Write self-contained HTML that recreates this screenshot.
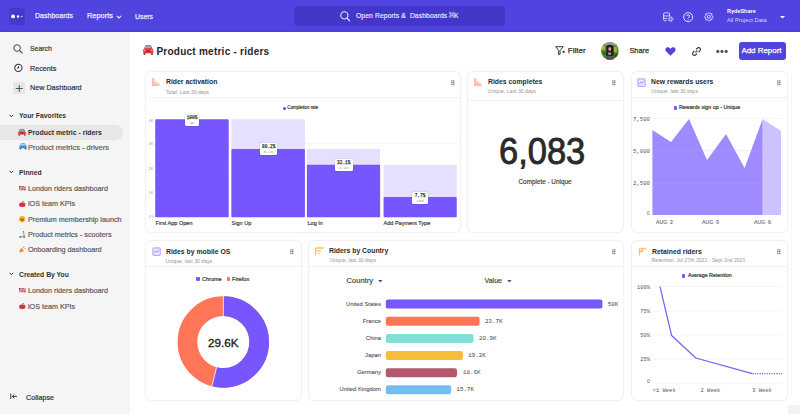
<!DOCTYPE html>
<html><head><meta charset="utf-8">
<style>
*{box-sizing:border-box;margin:0;padding:0}
html,body{width:800px;height:414px;overflow:hidden;background:#fff;font-family:"Liberation Sans",sans-serif;color:#2b2b2b}
.abs{position:absolute}
svg{position:absolute;overflow:visible}
#hdr{position:absolute;left:0;top:0;width:800px;height:32px;background:#4f44e0;border-bottom:1px solid #4a3fd8}
#side{position:absolute;left:0;top:32px;width:129px;height:382px;background:#f5f5f5;border-right:1px solid #f1f1f1;box-shadow:1px 0 0 #fafafa}
.t{position:absolute;white-space:nowrap;line-height:1}
.nav{color:#ebe9fd;font-size:7.2px;-webkit-text-stroke:0.25px #ebe9fd}
.si{font-size:7.2px;color:#5c5c5c;-webkit-text-stroke:0.2px #5c5c5c}
.sh{font-size:6.8px;font-weight:bold;color:#333}
.card{position:absolute;background:#fff;border:1px solid #f2f2f2;border-radius:6px;box-shadow:0 0 1.5px rgba(0,0,0,0.045)}
.ct{font-size:6.85px;font-weight:bold;color:#2b2b2b}
.cs{font-size:5.15px;color:#a3a3a3;-webkit-text-stroke:0.05px #a3a3a3}
.hd{position:absolute;left:0;right:0;height:1px;background:#f0f0f0}
.mono{font-family:"Liberation Mono",monospace}
.ax{font-size:5.6px;color:#6a6a6a;-webkit-text-stroke:0.05px #6a6a6a}
.lg{font-size:5.1px;font-weight:bold;color:#3a3a3a}
.grip{position:absolute;width:4px;height:5px}
.grip i{position:absolute;width:1.3px;height:1.3px;background:#8a8a8a;border-radius:50%}
.tip{position:absolute;background:#fff;border-radius:1.5px;box-shadow:0 0 1.2px rgba(0,0,0,0.4);text-align:center}
.tip b{display:block;font-family:"Liberation Mono",monospace;font-size:5.2px;line-height:5px;margin-top:2.3px;color:#333;font-weight:normal;-webkit-text-stroke:0.25px #333;transform:scaleX(0.85)}
.tip i{display:block;font-style:normal;font-family:"Liberation Mono",monospace;font-size:4.2px;line-height:4.5px;color:#999;margin-top:-0.5px}
.lbl{font-size:5.85px;color:#555;text-align:right;-webkit-text-stroke:0.1px #555}
.val{font-size:5.85px;color:#555;-webkit-text-stroke:0.05px #555}
</style></head><body>
<div id="hdr">
  <div class="abs" style="left:8.7px;top:8px;width:16.3px;height:16.5px;border-radius:3px;background:#4438ce"></div>
  <svg style="left:8px;top:8px" width="18" height="18" viewBox="0 0 18 18"><circle cx="5.05" cy="8.4" r="1.95" fill="#fff"/><circle cx="10.05" cy="8.4" r="1.25" fill="#fff"/><circle cx="13.7" cy="8.4" r="0.75" fill="#fff" opacity="0.9"/></svg>
  <div class="t nav" style="left:35px;top:12px;font-size:7.58px;transform:scaleX(0.93);transform-origin:0 0">Dashboards</div>
  <div class="t nav" style="left:87px;top:12px;font-size:7.96px;transform:scaleX(0.93);transform-origin:0 0">Reports</div>
  <svg style="left:116px;top:15px" width="6" height="4" viewBox="0 0 6 4"><path d="M0.8 0.8 L3 3 L5.2 0.8" fill="none" stroke="#ebe9fd" stroke-width="1.1"/></svg>
  <div class="t nav" style="left:135px;top:13.2px;font-size:7.42px;transform:scaleX(0.93);transform-origin:0 0">Users</div>
  <div class="abs" style="left:294px;top:6px;width:211px;height:19.5px;border-radius:4px;background:#4337c9"></div>
  <svg style="left:339.5px;top:11px" width="11" height="11" viewBox="0 0 11 11"><circle cx="4.4" cy="4.4" r="3.6" fill="none" stroke="#ebe9fd" stroke-width="1.1"/><path d="M7 7.1 L9.6 9.8" stroke="#ebe9fd" stroke-width="1.2" stroke-linecap="round"/></svg>
  <div class="t nav" style="left:355.5px;top:12px;font-size:7.26px;-webkit-text-stroke:0.15px #ebe9fd;transform:scaleX(0.93);transform-origin:0 0;letter-spacing:0.12px">Open Reports &amp;&nbsp; Dashboards</div>
  <svg style="left:448.6px;top:12.4px" width="5.6" height="5.6" viewBox="0 0 6 6"><path d="M2 2 H4 V4 H2 Z M2 2 V1.1 A0.9 0.9 0 1 0 1.1 2 H2 M4 2 V1.1 A0.9 0.9 0 1 1 4.9 2 H4 M4 4 V4.9 A0.9 0.9 0 1 0 4.9 4 H4 M2 4 V4.9 A0.9 0.9 0 1 1 1.1 4 H2" fill="none" stroke="#ebe9fd" stroke-width="0.65"/></svg>
  <div class="t nav" style="left:453.6px;top:12px;font-size:7.26px;-webkit-text-stroke:0.15px #ebe9fd;transform:scaleX(0.93);transform-origin:0 0">K</div>
  <!-- right icons -->
  <svg style="left:663px;top:12.3px" width="10.5" height="10" viewBox="0 0 10.5 10"><path d="M0.6 1.7 C0.6 0.4 6.6 0.4 6.6 1.7 V3.2 C6.6 4.3 0.6 4.3 0.6 3.2 Z M0.6 3.2 V5.6 C0.6 6.5 3 6.8 4.2 6.6 M0.6 5.6 V7.8 C0.6 8.7 2.6 9 3.6 8.8 M6.6 3.2 V4.4" fill="none" stroke="#ebe9fd" stroke-width="0.9"/><circle cx="7.6" cy="7.1" r="1.6" fill="none" stroke="#ebe9fd" stroke-width="0.9"/><circle cx="7.6" cy="7.1" r="2.5" fill="none" stroke="#ebe9fd" stroke-width="0.7" stroke-dasharray="0.9 1.06"/></svg>
  <svg style="left:682.8px;top:11.5px" width="10.5" height="10.5" viewBox="0 0 10.5 10.5"><circle cx="5.15" cy="5.1" r="4.5" fill="none" stroke="#ebe9fd" stroke-width="0.95"/><path d="M3.7 4 C3.7 2.3 6.6 2.3 6.6 4 C6.6 5.1 5.15 5.1 5.15 6.3" fill="none" stroke="#ebe9fd" stroke-width="0.9"/><circle cx="5.15" cy="7.7" r="0.55" fill="#ebe9fd"/></svg>
  <svg style="left:703.6px;top:11.7px" width="9.6" height="9.6" viewBox="0 0 9.6 9.6"><polygon points="4.80,0.50 6.06,1.75 7.84,1.76 7.85,3.54 9.10,4.80 7.85,6.06 7.84,7.84 6.06,7.85 4.80,9.10 3.54,7.85 1.76,7.84 1.75,6.06 0.50,4.80 1.75,3.54 1.76,1.76 3.54,1.75" fill="none" stroke="#ebe9fd" stroke-width="0.9" stroke-linejoin="round"/><circle cx="4.8" cy="4.8" r="1.45" fill="none" stroke="#ebe9fd" stroke-width="0.9"/></svg>
  <div class="t" style="left:727px;top:9.4px;font-size:5.5px;font-weight:bold;color:#fff">RydeShare</div>
  <div class="t" style="left:727px;top:18.2px;font-size:5.75px;color:#d9d6f9">All Project Data</div>
  <svg style="left:779.5px;top:15.5px" width="5" height="3" viewBox="0 0 5 3"><path d="M0 0 H5 L2.5 2.6 Z" fill="#fff"/></svg>
</div>

<div id="side">
  <svg style="left:13px;top:12.0px" width="11" height="10" viewBox="0 0 11 10"><circle cx="4.1" cy="4" r="3.3" fill="none" stroke="#444" stroke-width="1"/><path d="M6.5 6.4 L9.6 9.4" stroke="#444" stroke-width="1.1"/></svg>
  <div class="t si" style="left:30px;top:13.1px;font-size:7.42px;color:#333;-webkit-text-stroke:0.2px #333;transform:scaleX(0.93);transform-origin:0 0">Search</div>
  <svg style="left:13.6px;top:32.2px" width="9" height="9" viewBox="0 0 9 9"><circle cx="4.35" cy="3.85" r="3.65" fill="none" stroke="#333" stroke-width="1.05"/><path d="M4.5 2.1 V4.05 H2.9" fill="none" stroke="#333" stroke-width="0.95" stroke-linejoin="round"/></svg>
  <div class="t si" style="left:30px;top:32.7px;color:#333;-webkit-text-stroke:0.2px #333;font-size:7.74px;transform:scaleX(0.93);transform-origin:0 0">Recents</div>
  <div class="abs" style="left:13px;top:49.5px;width:11.5px;height:12.3px;background:#e6e6e6;border-radius:1px"></div>
  <svg style="left:14.5px;top:51.5px" width="9" height="9" viewBox="0 0 9 9"><path d="M4.3 1 V8 M0.8 4.5 H7.8" stroke="#444" stroke-width="0.9"/></svg>
  <div class="t si" style="left:30px;top:51.8px;color:#333;-webkit-text-stroke:0.2px #333;font-size:7.74px;transform:scaleX(0.93);transform-origin:0 0">New Dashboard</div>

  <svg style="left:9px;top:81.6px" width="5" height="4" viewBox="0 0 5 4"><path d="M0.6 0.8 L2.4 2.7 L4.2 0.8" fill="none" stroke="#333" stroke-width="1"/></svg>
  <div class="t sh" style="left:18.7px;top:80.3px;font-size:7.31px;transform:scaleX(0.93);transform-origin:0 0">Your Favorites</div>
  <div class="abs" style="left:0;top:92.5px;width:122.5px;height:15.5px;border-radius:0 8px 8px 0;background:#e7e7e7"></div>
  <div class="t sh" style="left:27.8px;top:97.2px;font-size:7.42px;color:#2f2f2f;transform:scaleX(0.93);transform-origin:0 0">Product metric - riders</div>
  <div class="t si" style="left:28px;top:111.5px;font-size:8.04px;transform:scaleX(0.93);transform-origin:0 0">Product metrics - drivers</div>

  <svg style="left:9px;top:138.0px" width="5" height="4" viewBox="0 0 5 4"><path d="M0.6 0.8 L2.4 2.7 L4.2 0.8" fill="none" stroke="#333" stroke-width="1"/></svg>
  <div class="t sh" style="left:18.7px;top:136.8px;font-size:7.31px;transform:scaleX(0.93);transform-origin:0 0">Pinned</div>
  <div class="t si" style="left:28px;top:152.5px;font-size:7.74px;transform:scaleX(0.93);transform-origin:0 0">London riders dashboard</div>
  <div class="t si" style="left:28px;top:168.0px;font-size:7.74px;transform:scaleX(0.93);transform-origin:0 0">iOS team KPIs</div>
  <div class="t si" style="left:28px;top:183.5px;font-size:7.74px;transform:scaleX(0.93);transform-origin:0 0">Premium membership launch</div>
  <div class="t si" style="left:28px;top:198.5px;font-size:7.74px;transform:scaleX(0.93);transform-origin:0 0">Product metrics - scooters</div>
  <div class="t si" style="left:28px;top:214.0px;font-size:7.74px;transform:scaleX(0.93);transform-origin:0 0">Onboarding dashboard</div>

  <svg style="left:9px;top:240.0px" width="5" height="4" viewBox="0 0 5 4"><path d="M0.6 0.8 L2.4 2.7 L4.2 0.8" fill="none" stroke="#333" stroke-width="1"/></svg>
  <div class="t sh" style="left:18.7px;top:238.8px;font-size:7.31px;transform:scaleX(0.93);transform-origin:0 0">Created By You</div>
  <div class="t si" style="left:28px;top:254.5px;font-size:7.74px;transform:scaleX(0.93);transform-origin:0 0">London riders dashboard</div>
  <div class="t si" style="left:28px;top:270.5px;font-size:7.74px;transform:scaleX(0.93);transform-origin:0 0">iOS team KPIs</div>

  <svg style="left:10px;top:361.0px" width="8" height="7" viewBox="0 0 8 7"><path d="M0.8 0.7 V6 M7 3.4 H2.4 M4.3 1.5 L2.4 3.4 L4.3 5.3" fill="none" stroke="#333" stroke-width="1"/></svg>
  <div class="t si" style="left:26px;top:361.5px;color:#333;-webkit-text-stroke:0.2px #333;font-size:7.74px;transform:scaleX(0.93);transform-origin:0 0">Collapse</div>

  <!-- emojis -->
  <svg style="left:18.2px;top:96.6px" width="8" height="6.5" viewBox="0 0 8 6.5"><path d="M1.5 0.9 Q1.8 0.2 2.5 0.2 H5.5 Q6.2 0.2 6.5 0.9 L7 2.5 Q7.8 2.9 7.8 3.8 V5.6 H0.2 V3.8 Q0.2 2.9 1 2.5 Z" fill="#e8323c"/><path d="M1.9 0.9 H6.1 L6.5 2.4 H1.5 Z" fill="#5bbfe8"/><rect x="2.7" y="3.9" width="2.6" height="1" fill="#a82030"/><rect x="0.5" y="5.5" width="1.5" height="1" fill="#2a2a2a"/><rect x="6" y="5.5" width="1.5" height="1" fill="#2a2a2a"/></svg>
  <svg style="left:18.8px;top:110.69999999999999px" width="8" height="6.2" viewBox="0 0 8 6.2"><path d="M0.3 3.2 L1.8 0.8 Q2.1 0.3 2.8 0.3 H5 Q5.7 0.3 6.2 0.8 L7.7 3.2 V5.2 H0.3 Z" fill="#3aa6dc"/><path d="M2.2 0.9 H5.6 L6.6 2.6 H1.3 Z" fill="#9fdcf5"/><rect x="2.3" y="3.4" width="3.4" height="0.8" fill="#1d6fa0"/><rect x="0.7" y="5.1" width="1.6" height="1.1" fill="#2a2a2a"/><rect x="5.7" y="5.1" width="1.6" height="1.1" fill="#2a2a2a"/></svg>
  <svg style="left:19.2px;top:153.8px" width="6.5" height="4.2" viewBox="0 0 6.5 4.2"><rect x="0" y="0" width="6.5" height="4.2" fill="#c8283c"/><path d="M0 0 L6.5 4.2 M6.5 0 L0 4.2" stroke="#fff" stroke-width="0.7"/><path d="M3.25 0 V4.2 M0 2.1 H6.5" stroke="#fff" stroke-width="1.3"/><path d="M3.25 0 V4.2 M0 2.1 H6.5" stroke="#c8283c" stroke-width="0.7"/><rect x="0" y="0" width="1.2" height="1" fill="#2b4a9a"/><rect x="5.3" y="3.2" width="1.2" height="1" fill="#2b4a9a"/></svg>
  <svg style="left:19.1px;top:168.8px" width="6.5" height="6.2" viewBox="0 0 6.5 6.2"><circle cx="2.3" cy="3.8" r="2.3" fill="#d8343b"/><circle cx="4.2" cy="3.8" r="2.3" fill="#d8343b"/><path d="M3.2 1.6 L3.6 0.2" stroke="#6b4a2a" stroke-width="0.5"/><path d="M3.5 1 C4.4 0.1 5.4 0.4 5.4 0.4 C5 1.3 4.1 1.3 3.5 1Z" fill="#5aa03c"/></svg>
  <svg style="left:19.2px;top:183.6px" width="6.3" height="6.3" viewBox="0 0 6.3 6.3"><circle cx="3.15" cy="3.15" r="3.1" fill="#f5b52e"/><path d="M1.3 3.3 C1.7 5.4 4.6 5.4 5 3.3 Z" fill="#8a4b18"/><path d="M1.5 2.4 Q2.1 1.7 2.6 2.4 M3.7 2.4 Q4.2 1.7 4.8 2.4" fill="none" stroke="#6b3a10" stroke-width="0.45"/></svg>
  <svg style="left:19.2px;top:198.8px" width="6.5" height="7" viewBox="0 0 6.5 7"><path d="M4.6 0.5 L5.2 5.8 M0.8 5.8 H5.2 M3.9 0.5 H5.2" fill="none" stroke="#555" stroke-width="0.65"/><circle cx="1.1" cy="6" r="0.85" fill="#666"/><circle cx="5.3" cy="6" r="0.85" fill="#666"/></svg>
  <svg style="left:19.2px;top:213.8px" width="6.6" height="6.8" viewBox="0 0 6.6 6.8"><path d="M0.3 6.6 L2 1.6 L5.4 5 Z" fill="#f2a93b"/><path d="M0.8 5.3 L2.4 2.6 M1.2 6.2 L4 4.4" stroke="#e24a3c" stroke-width="0.55"/><circle cx="4.3" cy="1" r="0.55" fill="#4a9be0"/><circle cx="6" cy="2.3" r="0.55" fill="#e24a7c"/><path d="M3.4 2.5 L5.7 0.5" stroke="#5ab04c" stroke-width="0.45"/></svg>
  <svg style="left:19.2px;top:255.60000000000002px" width="6.5" height="4.2" viewBox="0 0 6.5 4.2"><rect x="0" y="0" width="6.5" height="4.2" fill="#c8283c"/><path d="M0 0 L6.5 4.2 M6.5 0 L0 4.2" stroke="#fff" stroke-width="0.7"/><path d="M3.25 0 V4.2 M0 2.1 H6.5" stroke="#fff" stroke-width="1.3"/><path d="M3.25 0 V4.2 M0 2.1 H6.5" stroke="#c8283c" stroke-width="0.7"/><rect x="0" y="0" width="1.2" height="1" fill="#2b4a9a"/><rect x="5.3" y="3.2" width="1.2" height="1" fill="#2b4a9a"/></svg>
  <svg style="left:19.1px;top:270.7px" width="6.5" height="6.2" viewBox="0 0 6.5 6.2"><circle cx="2.3" cy="3.8" r="2.3" fill="#d8343b"/><circle cx="4.2" cy="3.8" r="2.3" fill="#d8343b"/><path d="M3.2 1.6 L3.6 0.2" stroke="#6b4a2a" stroke-width="0.5"/><path d="M3.5 1 C4.4 0.1 5.4 0.4 5.4 0.4 C5 1.3 4.1 1.3 3.5 1Z" fill="#5aa03c"/></svg>
</div>

<!-- page title -->
<svg style="left:142.8px;top:45.4px" width="10.5" height="10" viewBox="0 0 10.5 10"><path d="M2 1.2 Q2.4 0.3 3.4 0.3 H7.1 Q8.1 0.3 8.5 1.2 L9.3 3.4 Q10.3 3.9 10.3 5 V8.3 H0.2 V5 Q0.2 3.9 1.2 3.4 Z" fill="#e8323c"/><path d="M2.6 1.3 H7.9 L8.5 3.2 H2 Z" fill="#6cc4ec"/><rect x="3.6" y="5.4" width="3.3" height="1.4" fill="#b8222c"/><circle cx="1.7" cy="5.2" r="0.8" fill="#ffb0a0"/><circle cx="8.8" cy="5.2" r="0.8" fill="#ffb0a0"/><rect x="0.6" y="8.2" width="1.8" height="1.6" rx="0.4" fill="#2a2a2a"/><rect x="8.1" y="8.2" width="1.8" height="1.6" rx="0.4" fill="#2a2a2a"/></svg>
<div class="t" style="left:156.4px;top:46.7px;font-size:10px;font-weight:bold;color:#262626;letter-spacing:0.25px">Product metric - riders</div>

<!-- toolbar -->
<svg style="left:554.5px;top:46.4px" width="11" height="10" viewBox="0 0 11 10"><path d="M0.7 0.7 H8.3 L5.1 4.3 V8.2 L3.6 8.6 V4.3 Z" fill="none" stroke="#2e2e2e" stroke-width="0.95" stroke-linejoin="round"/><circle cx="8.6" cy="5.9" r="1.1" fill="#2e2e2e"/></svg>
<div class="t" style="left:567.8px;top:46.5px;font-size:8px;color:#333;-webkit-text-stroke:0.25px #333">Filter</div>
<svg style="left:600.8px;top:42.1px" width="17.8" height="17.8" viewBox="0 0 18 18"><defs><clipPath id="avc"><circle cx="9" cy="9" r="9"/></clipPath></defs><g clip-path="url(#avc)"><rect width="18" height="18" fill="#4f8a2c"/><rect x="0" y="0" width="18" height="3.5" fill="#9a9a9a"/><rect x="1" y="4" width="3" height="4" fill="#b4b23a"/><rect x="13" y="5" width="3" height="5" fill="#a7b03c"/><rect x="2" y="10" width="2.5" height="3" fill="#2f5a1c"/><rect x="14" y="12" width="3" height="3" fill="#2c4a1a"/><path d="M5.5 4 Q9 1.5 12.5 4 L13 18 H5 Z" fill="#1e1e1e"/><rect x="7.6" y="5.2" width="2.6" height="3.6" rx="1" fill="#e49a92"/><rect x="7.2" y="10.5" width="3" height="2.5" fill="#d8c8c0" opacity="0.7"/><rect x="5" y="14" width="8" height="4" fill="#555"/></g></svg>
<div class="t" style="left:629.5px;top:46.5px;font-size:7.3px;color:#333;-webkit-text-stroke:0.25px #333">Share</div>
<svg style="left:665px;top:47px" width="11" height="9" viewBox="0 0 11 9"><path d="M5.5 8.7 L1.2 4.6 C-0.4 3 0.5 0.3 2.8 0.3 C4 0.3 4.9 1 5.5 1.9 C6.1 1 7 0.3 8.2 0.3 C10.5 0.3 11.4 3 9.8 4.6 Z" fill="#4f44e0"/></svg>
<svg style="left:692px;top:46.5px" width="9" height="9" viewBox="0 0 9 9"><path d="M3.8 5.2 L5.2 3.8 M4.3 2.2 L5.3 1.2 C6 0.5 7.3 0.5 8 1.2 C8.6 1.9 8.6 3 8 3.7 L6.9 4.8 M4.7 6.9 L3.7 7.9 C3 8.6 1.8 8.6 1.1 7.9 C0.4 7.2 0.4 6 1.1 5.3 L2.2 4.2" fill="none" stroke="#333" stroke-width="1.15" stroke-linecap="round"/></svg>
<svg style="left:716px;top:48.5px" width="12" height="5" viewBox="0 0 12 5"><circle cx="1.8" cy="2.4" r="1.6" fill="#555"/><circle cx="6" cy="2.4" r="1.6" fill="#555"/><circle cx="10.2" cy="2.4" r="1.6" fill="#555"/></svg>
<div class="abs" style="left:738.5px;top:42px;width:47.5px;height:17.5px;border-radius:3px;background:#4f44e0"></div>
<div class="t" style="left:741.4px;top:47px;font-size:7.95px;color:#fff;-webkit-text-stroke:0.25px #fff">Add Report</div>

<!-- ============ CARD 1: Rider activation ============ -->
<div class="card" style="left:145px;top:71px;width:316px;height:161.5px"></div>
<svg style="left:151.9px;top:77.6px" width="8" height="8.5" viewBox="0 0 8 8.5"><g fill="#ff9c84" opacity="0.72"><rect x="0" y="0.3" width="2.4" height="7.9" rx="0.6"/><rect x="2.3" y="3.6" width="2.4" height="4.6"/><rect x="4.6" y="5.3" width="2.7" height="2.9" rx="0.4"/></g><g fill="#fff" opacity="0.55"><rect x="0.7" y="2.6" width="1" height="1"/><rect x="3" y="5" width="1" height="1"/><rect x="5.4" y="6.4" width="1.1" height="0.8"/></g></svg>
<div class="t ct" style="left:166px;top:78.3px;font-size:7.37px;transform:scaleX(0.93);transform-origin:0 0">Rider activation</div>
<div class="t cs" style="left:166px;top:89.5px">Total, Last 30 days</div>
<div class="abs" style="left:146px;top:97px;width:314px;height:1px;background:#f0f0f0"></div>
<svg style="left:450.9px;top:79.6px" width="4" height="6" viewBox="0 0 4 6"><g fill="#5a5a5a"><circle cx="0.9" cy="0.9" r="0.72"/><circle cx="2.8" cy="0.9" r="0.72"/><circle cx="0.9" cy="2.75" r="0.72"/><circle cx="2.8" cy="2.75" r="0.72"/><circle cx="0.9" cy="4.6" r="0.72"/><circle cx="2.8" cy="4.6" r="0.72"/></g></svg>
<!-- legend -->
<div class="abs" style="left:282.8px;top:106.6px;width:3px;height:3px;border-radius:50%;background:#5a46f0"></div>
<div class="t" style="left:287.2px;top:105.6px;font-size:4.5px;color:#333;-webkit-text-stroke:0.15px #333;letter-spacing:-0.05px">Completion rate</div>
<!-- axes -->
<div class="t" style="left:148.6px;top:119.0px;font-size:4.1px;color:#aaa">4K</div>
<div class="t" style="left:148.6px;top:142.4px;font-size:4.1px;color:#aaa">3K</div>
<div class="t" style="left:148.6px;top:166.8px;font-size:4.1px;color:#aaa">2K</div>
<div class="t" style="left:148.6px;top:191.0px;font-size:4.1px;color:#aaa">1K</div>
<div class="t" style="left:148.6px;top:215.4px;font-size:4.1px;color:#aaa">0%</div>
<svg style="left:0;top:0" width="800" height="414" viewBox="0 0 800 414">
  <line x1="155" y1="143.6" x2="457" y2="143.6" stroke="#f2f2f2" stroke-width="0.8"/>
  <line x1="156" y1="168" x2="457" y2="168" stroke="#f2f2f2" stroke-width="0.8"/>
  <line x1="156" y1="192.5" x2="457" y2="192.5" stroke="#f2f2f2" stroke-width="0.8"/>
  <rect x="155.2" y="119.3" width="73.5" height="97.9" rx="0.8" fill="#7856ff"/>
  <rect x="231.4" y="119.3" width="73.5" height="97.9" fill="#e5e0ff"/>
  <rect x="231.4" y="149" width="73.5" height="68.2" rx="0.8" fill="#7856ff"/>
  <rect x="306.9" y="149" width="73.2" height="68.2" fill="#e5e0ff"/>
  <rect x="306.9" y="164.8" width="73.2" height="52.4" rx="0.8" fill="#7856ff"/>
  <rect x="383.6" y="164.9" width="73.1" height="52.3" fill="#e5e0ff"/>
  <rect x="383.6" y="197" width="73.1" height="20.2" rx="0.8" fill="#7856ff"/>
</svg>
<div class="tip" style="left:185px;top:114px;width:14px;height:11.5px"><b>100%</b><i>4K</i></div>
<div class="tip" style="left:259.5px;top:143px;width:17.5px;height:12px"><b>80.2%</b><i>3.2K</i></div>
<div class="tip" style="left:335px;top:159px;width:17.5px;height:12px"><b>32.1%</b><i>2.4K</i></div>
<div class="tip" style="left:412px;top:192px;width:16px;height:12px"><b>7.7%</b><i>283</i></div>
<div class="t" style="left:155.5px;top:221px;font-size:5.55px;color:#333;-webkit-text-stroke:0.15px #333">First App Open</div>
<div class="t" style="left:231.5px;top:221px;font-size:5.55px;color:#333;-webkit-text-stroke:0.15px #333">Sign Up</div>
<div class="t" style="left:307.5px;top:221px;font-size:5.55px;color:#333;-webkit-text-stroke:0.15px #333">Log In</div>
<div class="t" style="left:383.5px;top:221px;font-size:5.55px;color:#333;-webkit-text-stroke:0.15px #333">Add Payment Type</div>

<!-- ============ CARD 2: Rides completes ============ -->
<div class="card" style="left:467px;top:71px;width:157px;height:161.5px"></div>
<svg style="left:473.9px;top:77.6px" width="8" height="8.5" viewBox="0 0 8 8.5"><g fill="#ff9c84" opacity="0.72"><rect x="0" y="0.3" width="2.4" height="7.9" rx="0.6"/><rect x="2.3" y="3.6" width="2.4" height="4.6"/><rect x="4.6" y="5.3" width="2.7" height="2.9" rx="0.4"/></g><g fill="#fff" opacity="0.55"><rect x="0.7" y="2.6" width="1" height="1"/><rect x="3" y="5" width="1" height="1"/><rect x="5.4" y="6.4" width="1.1" height="0.8"/></g></svg>
<div class="t ct" style="left:487.6px;top:78.2px;font-size:7.37px;transform:scaleX(0.93);transform-origin:0 0">Rides completes</div>
<div class="t cs" style="left:487.6px;top:89.3px">Unique, Last 30 days</div>
<div class="abs" style="left:468px;top:100.3px;width:155px;height:1px;background:#f0f0f0"></div>
<svg style="left:612.4px;top:79.6px" width="4" height="6" viewBox="0 0 4 6"><g fill="#5a5a5a"><circle cx="0.9" cy="0.9" r="0.72"/><circle cx="2.8" cy="0.9" r="0.72"/><circle cx="0.9" cy="2.75" r="0.72"/><circle cx="2.8" cy="2.75" r="0.72"/><circle cx="0.9" cy="4.6" r="0.72"/><circle cx="2.8" cy="4.6" r="0.72"/></g></svg>
<div class="t" style="left:499px;top:133.2px;font-size:37.7px;color:#2a2a2a;-webkit-text-stroke:0.9px #2a2a2a;transform:scaleX(0.915);transform-origin:0 0">6,083</div>
<div class="t" style="left:518.5px;top:179px;font-size:6.36px;color:#3a3a3a;-webkit-text-stroke:0.15px #3a3a3a">Complete - Unique</div>

<!-- ============ CARD 3: New rewards users ============ -->
<div class="card" style="left:631px;top:71px;width:156.5px;height:161.5px"></div>
<svg style="left:637px;top:78px" width="9" height="9" viewBox="0 0 9 9"><rect x="0.9" y="0.9" width="7.3" height="7.5" rx="0.5" fill="#ece7ff" stroke="#a893ff" stroke-width="0.9"/><path d="M2.2 6.2 L3.8 3.9 L5.2 5.2 L6.9 2.8" fill="none" stroke="#9a84ff" stroke-width="0.85"/></svg>
<div class="t ct" style="left:651.4px;top:78.2px;font-size:7.37px;transform:scaleX(0.93);transform-origin:0 0">New rewards users</div>
<div class="t cs" style="left:651.4px;top:89.3px">Unique, last 30 days</div>
<div class="abs" style="left:632px;top:97px;width:154.5px;height:1px;background:#f0f0f0"></div>
<svg style="left:776.6px;top:79.6px" width="4" height="6" viewBox="0 0 4 6"><g fill="#5a5a5a"><circle cx="0.9" cy="0.9" r="0.72"/><circle cx="2.8" cy="0.9" r="0.72"/><circle cx="0.9" cy="2.75" r="0.72"/><circle cx="2.8" cy="2.75" r="0.72"/><circle cx="0.9" cy="4.6" r="0.72"/><circle cx="2.8" cy="4.6" r="0.72"/></g></svg>
<div class="abs" style="left:673.5px;top:106.3px;width:3.6px;height:3.6px;border-radius:1px;background:#7856ff"></div>
<div class="t lg" style="left:679px;top:105.3px;font-size:5.55px;font-weight:normal;-webkit-text-stroke:0.22px #3a3a3a;transform:scaleX(0.96);transform-origin:0 0">Rewards sign up - Unique</div>
<div class="t ax mono" style="left:633px;top:116.5px;font-size:5.67px">7,500</div>
<div class="t ax mono" style="left:633px;top:148.5px;font-size:5.67px">5,000</div>
<div class="t ax mono" style="left:633px;top:180.5px;font-size:5.67px">2,500</div>
<div class="t" style="left:646.8px;top:210.8px;font-size:5.4px;color:#666">0</div>
<svg style="left:0;top:0" width="800" height="414" viewBox="0 0 800 414">
  <line x1="652" y1="118.6" x2="782" y2="118.6" stroke="#efefef" stroke-width="0.8"/>
  <polygon points="652.4,130 671,142 689,119 707,160 726,134 744.6,168 762.6,119 762.6,215 652.4,215" fill="#9f8aff"/>
  <polygon points="762.6,119 781,131 781,215 762.6,215" fill="#cdc2ff"/>
  <line x1="652.4" y1="150.8" x2="762" y2="150.8" stroke="#b9abff" stroke-width="0.6" stroke-dasharray="0.9 1.1"/>
  <line x1="652.4" y1="183.2" x2="762" y2="183.2" stroke="#b9abff" stroke-width="0.6" stroke-dasharray="0.9 1.1"/>
  <line x1="762" y1="122" x2="762" y2="215" stroke="#8d76ff" stroke-width="0.6" stroke-dasharray="0.9 1.1"/>
</svg>
<div class="t" style="left:656px;top:220px;font-size:5.2px;color:#666;-webkit-text-stroke:0.1px #666">AUG&nbsp;&nbsp;2</div>
<div class="t" style="left:702px;top:220px;font-size:5.2px;color:#666;-webkit-text-stroke:0.1px #666">AUG&nbsp;&nbsp;9</div>
<div class="t" style="left:754px;top:220px;font-size:5.2px;color:#666;-webkit-text-stroke:0.1px #666">AUG&nbsp;&nbsp;6</div>

<!-- ============ CARD 4: Rides by mobile OS ============ -->
<div class="card" style="left:145px;top:240px;width:157px;height:161px"></div>
<svg style="left:151.5px;top:247px" width="9" height="9" viewBox="0 0 9 9"><rect x="0.9" y="0.9" width="7.3" height="7.5" rx="0.5" fill="#ece7ff" stroke="#a893ff" stroke-width="0.9"/><path d="M2.2 6.2 L3.8 3.9 L5.2 5.2 L6.9 2.8" fill="none" stroke="#9a84ff" stroke-width="0.85"/></svg>
<div class="t ct" style="left:165.6px;top:247.8px;font-size:7.37px;transform:scaleX(0.93);transform-origin:0 0">Rides by mobile OS</div>
<div class="t cs" style="left:165.6px;top:258.7px">Unique, last 30 days</div>
<div class="abs" style="left:146px;top:266px;width:155px;height:1px;background:#f0f0f0"></div>
<svg style="left:290.1px;top:248.6px" width="4" height="6" viewBox="0 0 4 6"><g fill="#5a5a5a"><circle cx="0.9" cy="0.9" r="0.72"/><circle cx="2.8" cy="0.9" r="0.72"/><circle cx="0.9" cy="2.75" r="0.72"/><circle cx="2.8" cy="2.75" r="0.72"/><circle cx="0.9" cy="4.6" r="0.72"/><circle cx="2.8" cy="4.6" r="0.72"/></g></svg>
<div class="abs" style="left:196px;top:277.4px;width:3.6px;height:3.6px;border-radius:1px;background:#7856ff"></div>
<div class="t lg" style="left:201.8px;top:276.8px;font-size:5.75px;font-weight:normal;-webkit-text-stroke:0.22px #3a3a3a;transform:scaleX(0.96);transform-origin:0 0">Chrome</div>
<div class="abs" style="left:226.7px;top:277.4px;width:3.6px;height:3.6px;border-radius:1px;background:#ff7557"></div>
<div class="t lg" style="left:232.4px;top:276.8px;font-size:5.9px;font-weight:normal;-webkit-text-stroke:0.22px #3a3a3a;transform:scaleX(0.96);transform-origin:0 0">Firefox</div>
<svg style="left:0;top:0" width="800" height="414" viewBox="0 0 800 414">
  <!-- donut center 223.3,342 r outer 45.7 inner 26 ; mid r 35.85 width 19.7 -->
  <circle cx="223.3" cy="342" r="35.85" fill="none" stroke="#ff7557" stroke-width="19.7"/>
  <circle cx="223.3" cy="342" r="35.85" fill="none" stroke="#7856ff" stroke-width="19.7" stroke-dasharray="121.6 1000" transform="rotate(-90 223.3 342)"/>
  <line x1="223.3" y1="295.5" x2="223.3" y2="316.5" stroke="#fff" stroke-width="0.8"/>
  <line x1="216.6" y1="367.2" x2="211.8" y2="386.6" stroke="#fff" stroke-width="0.8"/>
</svg>
<div class="t" style="left:208px;top:336.5px;font-size:11.7px;color:#222;-webkit-text-stroke:0.35px #222">29.6K</div>

<!-- ============ CARD 5: Riders by Country ============ -->
<div class="card" style="left:308px;top:240px;width:316px;height:161px"></div>
<svg style="left:314.5px;top:246.5px" width="9" height="9" viewBox="0 0 9 9"><path d="M0.5 1 H8.5 M0.5 3.8 H6 M0.5 1 V8.5 M3 6.3 H4.5" fill="none" stroke="#fbc15e" stroke-width="1.3"/></svg>
<div class="t ct" style="left:329.4px;top:247.3px;font-size:7.37px;transform:scaleX(0.93);transform-origin:0 0">Riders by Country</div>
<div class="t cs" style="left:329.4px;top:257.5px">Unique, last 30 days</div>
<div class="abs" style="left:309px;top:266px;width:314px;height:1px;background:#f0f0f0"></div>
<svg style="left:612.4px;top:248.6px" width="4" height="6" viewBox="0 0 4 6"><g fill="#5a5a5a"><circle cx="0.9" cy="0.9" r="0.72"/><circle cx="2.8" cy="0.9" r="0.72"/><circle cx="0.9" cy="2.75" r="0.72"/><circle cx="2.8" cy="2.75" r="0.72"/><circle cx="0.9" cy="4.6" r="0.72"/><circle cx="2.8" cy="4.6" r="0.72"/></g></svg>
<div class="t" style="left:346.6px;top:276.5px;font-size:7.54px;color:#4a4a4a;-webkit-text-stroke:0.2px #4a4a4a">Country</div>
<svg style="left:378px;top:279.8px" width="5" height="3" viewBox="0 0 5 3"><path d="M0.2 0 H4.6 L2.4 2.4 Z" fill="#555"/></svg>
<div class="t" style="left:484.5px;top:276.5px;font-size:7.05px;color:#4a4a4a;-webkit-text-stroke:0.2px #4a4a4a">Value</div>
<svg style="left:507.3px;top:279.8px" width="5" height="3" viewBox="0 0 5 3"><path d="M0.2 0 H4.6 L2.4 2.4 Z" fill="#555"/></svg>
<svg style="left:0;top:0" width="800" height="414" viewBox="0 0 800 414">
  <rect x="385.8" y="299.6" width="216.6" height="9" rx="2.2" fill="#7856ff"/>
  <rect x="385.8" y="316.7" width="93.8" height="9" rx="2.2" fill="#ff7557"/>
  <rect x="385.8" y="333.9" width="87.7" height="9" rx="2.2" fill="#80e0d8"/>
  <rect x="385.8" y="351" width="77.1" height="9" rx="2.2" fill="#f8bc3b"/>
  <rect x="385.8" y="368.2" width="71.2" height="9" rx="2.2" fill="#b2596e"/>
  <rect x="385.8" y="385.3" width="65.4" height="9" rx="2.2" fill="#72bef4"/>
</svg>
<div class="t lbl" style="right:419px;top:302.2px">United States</div>
<div class="t lbl" style="right:419px;top:318.5px">France</div>
<div class="t lbl" style="right:419px;top:335.7px">China</div>
<div class="t lbl" style="right:419px;top:352.5px">Japan</div>
<div class="t lbl" style="right:419px;top:369.8px">Germany</div>
<div class="t lbl" style="right:419px;top:387.3px">United Kingdom</div>
<div class="t val mono" style="left:607.8px;top:302.2px">50K</div>
<div class="t val mono" style="left:485px;top:318.5px">23.7K</div>
<div class="t val mono" style="left:479px;top:335.7px">20.9K</div>
<div class="t val mono" style="left:468.2px;top:352.5px">19.2K</div>
<div class="t val mono" style="left:462.9px;top:369.8px">18.6K</div>
<div class="t val mono" style="left:456.5px;top:387.3px">15.7K</div>

<!-- ============ CARD 6: Retained riders ============ -->
<div class="card" style="left:631px;top:240px;width:156.5px;height:161px"></div>
<svg style="left:637.5px;top:246.5px" width="9" height="9" viewBox="0 0 9 9"><path d="M0.5 1.8 H8.5 M1.5 1.8 V8.5 M4.5 0.5 V4.5 H1.5" fill="none" stroke="#fbc15e" stroke-width="1.3"/></svg>
<div class="t ct" style="left:651.6px;top:247.6px;font-size:7.37px;transform:scaleX(0.93);transform-origin:0 0">Retained riders</div>
<div class="t cs" style="left:651.6px;top:258.2px">Retention, Jul 27th 2021 - Sept 2nd 2021</div>
<div class="abs" style="left:632px;top:266px;width:154.5px;height:1px;background:#f0f0f0"></div>
<svg style="left:776.6px;top:248.6px" width="4" height="6" viewBox="0 0 4 6"><g fill="#5a5a5a"><circle cx="0.9" cy="0.9" r="0.72"/><circle cx="2.8" cy="0.9" r="0.72"/><circle cx="0.9" cy="2.75" r="0.72"/><circle cx="2.8" cy="2.75" r="0.72"/><circle cx="0.9" cy="4.6" r="0.72"/><circle cx="2.8" cy="4.6" r="0.72"/></g></svg>
<div class="abs" style="left:681.8px;top:274.2px;width:3.6px;height:3.6px;border-radius:1px;background:#7856ff"></div>
<div class="t lg" style="left:687.6px;top:273.3px;font-size:5.5px;font-weight:normal;-webkit-text-stroke:0.22px #3a3a3a;transform:scaleX(0.96);transform-origin:0 0">Average Retention</div>
<div class="t ax mono" style="left:637px;top:284.5px;font-size:5.42px">100%</div>
<div class="t ax mono" style="left:640.3px;top:308.8px;font-size:5.42px">75%</div>
<div class="t ax mono" style="left:640.3px;top:333px;font-size:5.42px">50%</div>
<div class="t ax mono" style="left:640.3px;top:357.2px;font-size:5.42px">25%</div>
<div class="t" style="left:646.9px;top:378.9px;font-size:5.4px;color:#666">0</div>
<svg style="left:0;top:0" width="800" height="414" viewBox="0 0 800 414">
  <line x1="653" y1="286.6" x2="781.5" y2="286.6" stroke="#f0f0f0" stroke-width="0.7"/>
  <line x1="653" y1="310.9" x2="781.5" y2="310.9" stroke="#f0f0f0" stroke-width="0.7"/>
  <line x1="653" y1="335" x2="781.5" y2="335" stroke="#f0f0f0" stroke-width="0.7"/>
  <line x1="653" y1="359.2" x2="781.5" y2="359.2" stroke="#f0f0f0" stroke-width="0.7"/>
  <line x1="653" y1="383.4" x2="781.5" y2="383.4" stroke="#f0f0f0" stroke-width="0.7"/>
  <polyline points="660,286.6 671.6,335.5 695.8,358 752.3,373.7" fill="none" stroke="#7b5cff" stroke-width="1.2" stroke-linejoin="round"/>
  <line x1="752.3" y1="373.7" x2="782" y2="373.7" stroke="#7b5cff" stroke-width="1.2" stroke-dasharray="1.2 1.2"/>
</svg>
<div class="t ax mono" style="left:652.8px;top:387.5px;font-size:5.45px">&lt;1 Week</div>
<div class="t ax mono" style="left:700.6px;top:387.5px;font-size:5.45px">2 Week</div>
<div class="t ax mono" style="left:752.3px;top:387.5px;font-size:5.45px">3 Week</div>
<div class="abs" style="left:787.5px;top:404.5px;width:13px;height:10px;background:#f3f3f3"></div>
<div class="abs" style="left:790.5px;top:71px;width:0.6px;height:325px;background:#f7f7f7"></div>
</body></html>
